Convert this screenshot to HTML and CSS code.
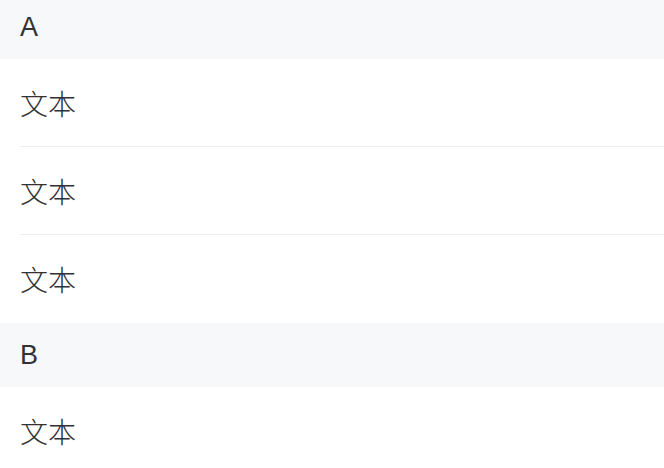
FILE: index.html
```html
<!DOCTYPE html>
<html lang="zh">
<head>
<meta charset="utf-8">
<link rel="stylesheet" href="styles.css">
</head>
<body>
<div class="index-bar">
  <div class="anchor">A</div>
  <div class="cell">文本</div>
  <div class="cell">文本</div>
  <div class="cell last">文本</div>
  <div class="anchor">B</div>
  <div class="cell">文本</div>
</div>
</body>
</html>
```
FILE: styles.css
```css
html, body {
  margin: 0;
  padding: 0;
  background: #ffffff;
  overflow: hidden;
}
.index-bar {
  margin-top: -5px;
  font-family: "Liberation Sans", "Noto Sans CJK SC", sans-serif;
  color: #323233;
}
.anchor {
  height: 64px;
  line-height: 64px;
  padding: 0 20px;
  font-size: 27px;
  background: #f7f8fa;
}
.cell {
  position: relative;
  padding: 20px 20px;
  line-height: 48px;
  font-size: 28px;
  background: #ffffff;
  font-family: "Noto Sans CJK SC", sans-serif;
  font-weight: 300;
}
.cell::after {
  content: "";
  position: absolute;
  left: 20px;
  right: 0;
  bottom: 0;
  height: 1px;
  background: #ebedf0;
}
.cell.last::after {
  display: none;
}
```
